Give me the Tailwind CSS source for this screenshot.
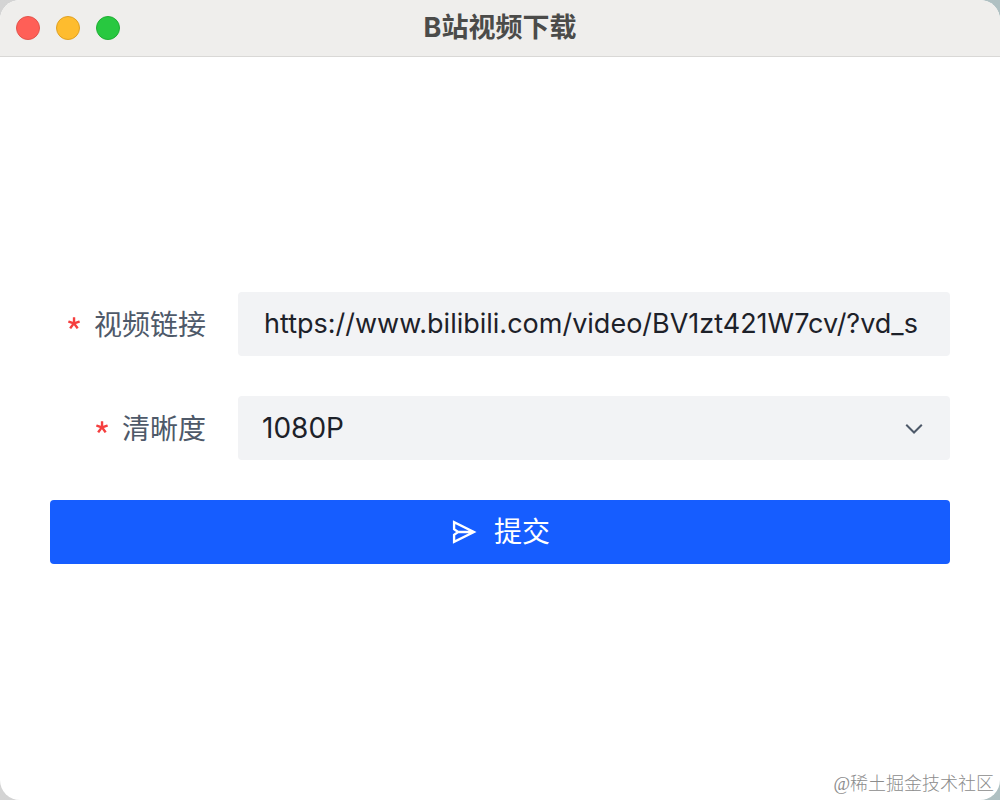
<!DOCTYPE html>
<html lang="zh-CN">
<head>
    <meta charset="UTF-8">
    <meta name="viewport" content="width=device-width, initial-scale=1.0">
    <title>B站视频下载</title>
    <script src="https://cdn.jsdelivr.net/npm/@tailwindcss/browser@4"></script>
</head>
<body class="bg-linear-to-r from-[#d4d4d4] to-[#afc0c2] font-['Inter','Noto_Sans_CJK_SC',sans-serif]">
    <div class="relative flex flex-col min-h-screen bg-white rounded-[20px] overflow-hidden">
        <!-- Title bar -->
        <header class="grid grid-cols-[1fr_auto_1fr] items-center h-[57px] px-4 bg-[#efeeec] border-b border-[#d9d8d6]">
            <div class="flex gap-4">
                <span class="size-6 rounded-full bg-[#ff5f57] border border-[#e2544c]"></span>
                <span class="size-6 rounded-full bg-[#febc2e] border border-[#dfa023]"></span>
                <span class="size-6 rounded-full bg-[#28c840] border border-[#1fae33]"></span>
            </div>
            <h1 class="text-[27px] leading-8 font-bold text-[#4b4b49]">B站视频下载</h1>
        </header>

        <!-- Download form -->
        <main class="flex-1 flex items-center px-[50px] pb-0.5">
            <form class="w-full flex flex-col gap-10 text-[28px] leading-10">
                <div class="flex items-center">
                    <label for="url" class="w-[188px] pt-0.5 pr-8 flex items-center justify-end gap-[14px] text-[#4e5969]">
                        <svg class="size-3 mb-1 text-[#f53f3f]" viewBox="0 0 1024 1024" fill="currentColor" aria-hidden="true"><path d="M583 17c19 0 34 15 34 34v349l314-102a34 34 0 0 1 43 22l42 130a34 34 0 0 1-22 43l-316 102 209 288a34 34 0 0 1-7 48l-111 80a34 34 0 0 1-48-7L506 706 288 1005a34 34 0 0 1-48 8l-110-80a34 34 0 0 1-7-48l214-296L29 490a34 34 0 0 1-22-43l42-130a34 34 0 0 1 43-22l321 104V51c0-19 15-34 34-34h136z"/></svg>
                        视频链接
                    </label>
                    <input id="url" type="text" value="https://www.bilibili.com/video/BV1zt421W7cv/?vd_s"
                        class="flex-1 min-w-0 h-16 px-[26px] rounded-sm bg-[#f2f3f5] text-[27px] text-[#1d2129] outline-none">
                </div>
                <div class="flex items-center">
                    <label for="quality" class="w-[188px] pt-0.5 pr-8 flex items-center justify-end gap-[14px] text-[#4e5969]">
                        <svg class="size-3 mb-1 text-[#f53f3f]" viewBox="0 0 1024 1024" fill="currentColor" aria-hidden="true"><path d="M583 17c19 0 34 15 34 34v349l314-102a34 34 0 0 1 43 22l42 130a34 34 0 0 1-22 43l-316 102 209 288a34 34 0 0 1-7 48l-111 80a34 34 0 0 1-48-7L506 706 288 1005a34 34 0 0 1-48 8l-110-80a34 34 0 0 1-7-48l214-296L29 490a34 34 0 0 1-22-43l42-130a34 34 0 0 1 43-22l321 104V51c0-19 15-34 34-34h136z"/></svg>
                        清晰度
                    </label>
                    <div class="relative flex-1 min-w-0">
                        <select id="quality"
                            class="block w-full h-16 px-6 appearance-none rounded-sm bg-[#f2f3f5] text-[#1d2129] outline-none">
                            <option>1080P</option>
                        </select>
                        <svg class="absolute right-6 top-5 size-6 text-[#4e5969] pointer-events-none" viewBox="0 0 48 48" fill="none" stroke="currentColor" stroke-width="4" aria-hidden="true"><path d="M39.6 17.443 24.043 33 8.487 17.443"/></svg>
                    </div>
                </div>
                <button type="button" class="w-full h-16 flex items-center justify-center gap-4 rounded-sm bg-[#165dff] text-white">
                    <svg class="size-7" viewBox="0 0 48 48" fill="none" stroke="currentColor" stroke-width="4" aria-hidden="true"><path d="m14 24-7-5V7l34 17L7 41V29l7-5Zm0 0h25"/></svg>
                    提交
                </button>
            </form>
        </main>

        <p class="absolute right-[6px] bottom-1 text-lg leading-6 font-light text-[#8c8c8c] font-['Liberation_Serif','Noto_Sans_CJK_SC',serif]">@稀土掘金技术社区</p>
    </div>
</body>
</html>
